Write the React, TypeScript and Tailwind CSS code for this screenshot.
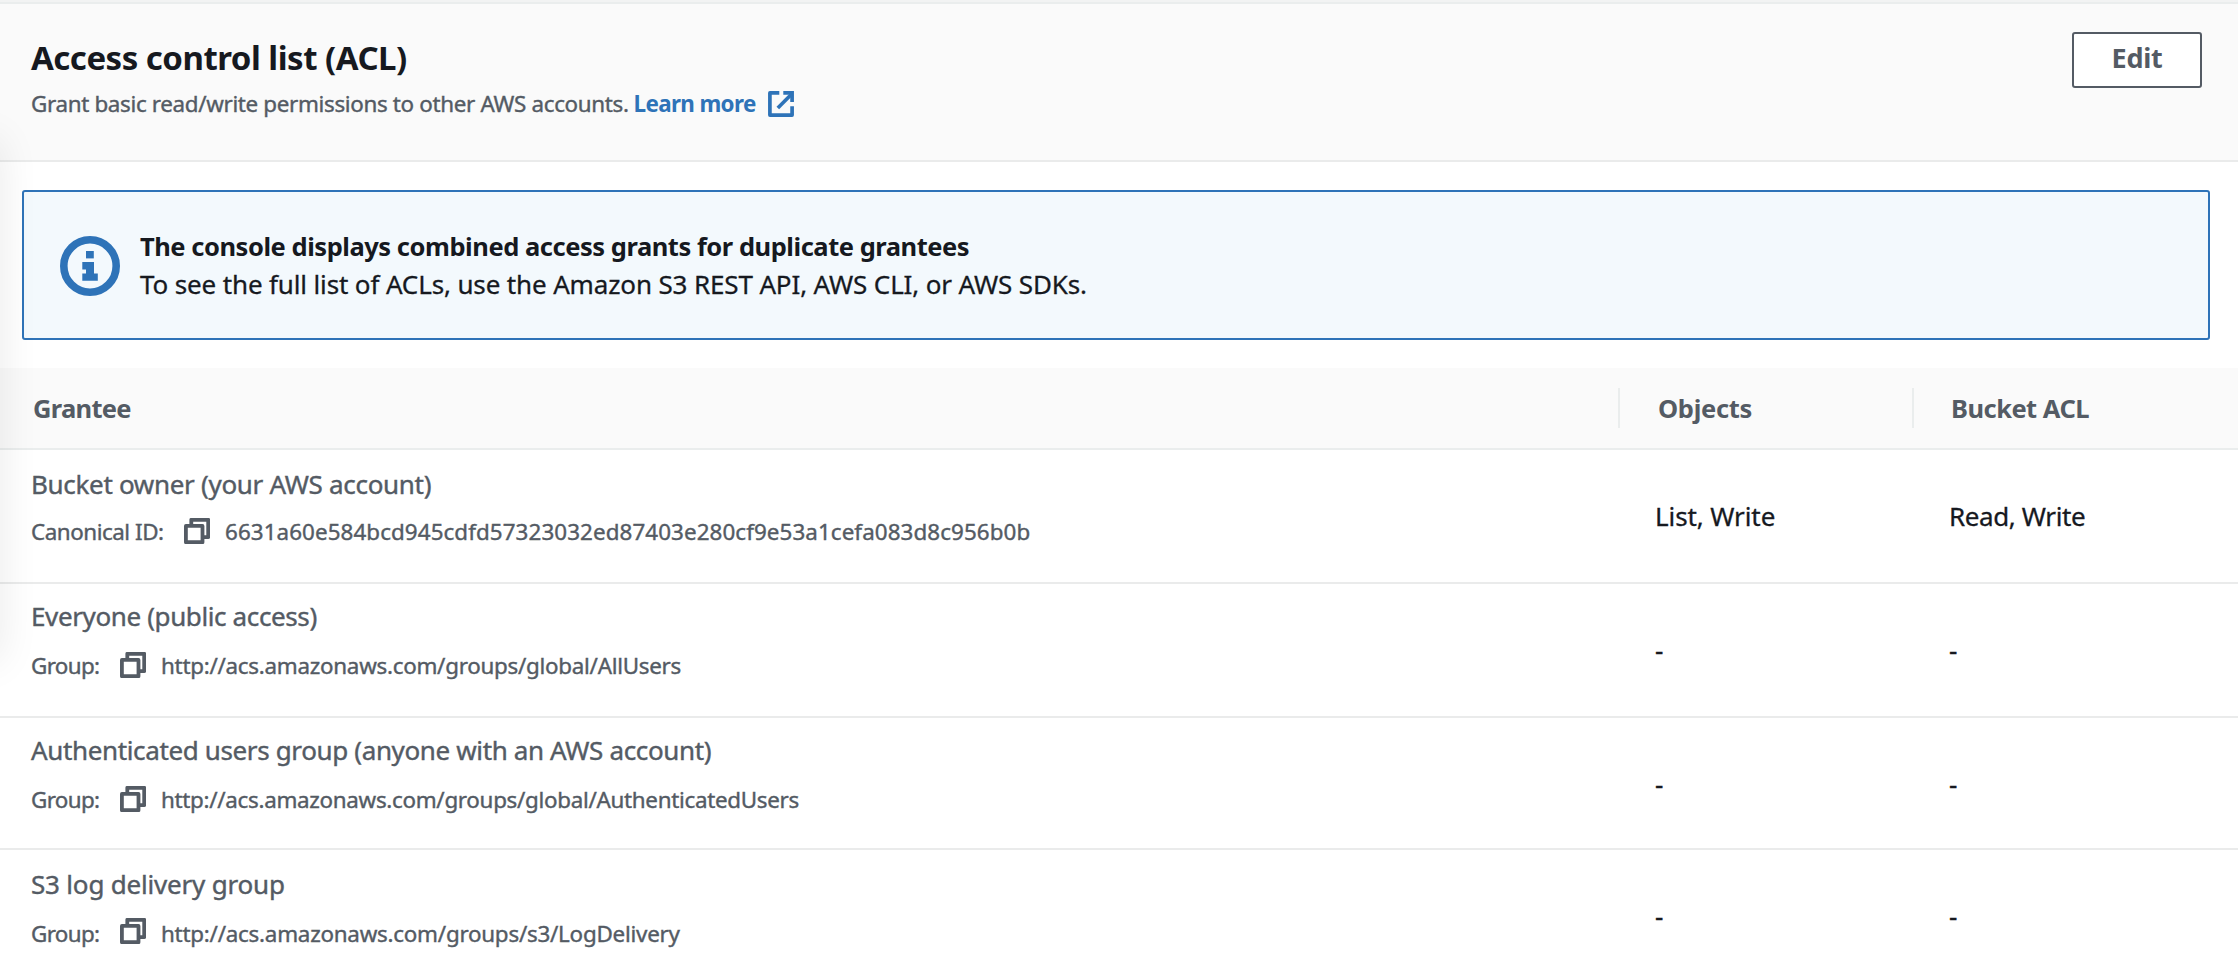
import React from 'react';

type Grant = {
  title: string;
  titleClass: string;
  label: string;
  labelClass: string;
  value: string;
  valueClass: string;
  objects: string;
  bucketAcl: string;
  rowClass: string;
};

const grants: Grant[] = [
  {
    title: 'Bucket owner (your AWS account)',
    titleClass: 'pt-[18px] h-[65px] tracking-[-0.31px]',
    label: 'Canonical ID:',
    labelClass: 'w-[153px] pt-[2px] tracking-[-0.46px]',
    value: '6631a60e584bcd945cdfd57323032ed87403e280cf9e53a1cefa083d8c956b0b',
    valueClass: 'pt-[2px] tracking-[0.08px]',
    objects: 'List, Write',
    bucketAcl: 'Read, Write',
    rowClass: 'h-[134px] border-b-2',
  },
  {
    title: 'Everyone (public access)',
    titleClass: 'pt-[16px] h-[65px] tracking-[-0.38px]',
    label: 'Group:',
    labelClass: 'w-[89px] pt-[2px] tracking-[-0.64px]',
    value: 'http://acs.amazonaws.com/groups/global/AllUsers',
    valueClass: 'pt-[2px] tracking-[-0.27px]',
    objects: '-',
    bucketAcl: '-',
    rowClass: 'h-[134px] border-b-2',
  },
  {
    title: 'Authenticated users group (anyone with an AWS account)',
    titleClass: 'pt-[16px] h-[65px] tracking-[-0.365px]',
    label: 'Group:',
    labelClass: 'w-[89px] pt-[2px] tracking-[-0.64px]',
    value: 'http://acs.amazonaws.com/groups/global/AuthenticatedUsers',
    valueClass: 'pt-[2px] tracking-[-0.3px]',
    objects: '-',
    bucketAcl: '-',
    rowClass: 'h-[132px] border-b-2',
  },
  {
    title: 'S3 log delivery group',
    titleClass: 'pt-[18px] h-[65px] tracking-[-0.19px]',
    label: 'Group:',
    labelClass: 'w-[89px] pt-[5px] tracking-[-0.64px]',
    value: 'http://acs.amazonaws.com/groups/s3/LogDelivery',
    valueClass: 'pt-[5px] tracking-[-0.24px]',
    objects: '-',
    bucketAcl: '-',
    rowClass: 'h-[124px]',
  },
];

function ExternalIcon() {
  return (
    <svg className="ml-[12px] mt-[4px] size-[26px] shrink-0" viewBox="0 0 26 26" fill="none" stroke="currentColor" strokeWidth="3.7">
      <path d="M11.3 1.9H1.9V24.1H24.1V15.3" strokeLinejoin="round" />
      <path d="M15.3 1.9H24.1V11" />
      <path d="M9.8 17 24 2.8" />
    </svg>
  );
}

function CopyIcon() {
  return (
    <svg className="size-[26px] shrink-0" viewBox="0 0 26 26" fill="none" stroke="currentColor" strokeWidth="3.8" strokeLinejoin="round">
      <path d="M7.3 6V1.8H24.2V19.2H20" />
      <path d="M1.9 7.9H18.5V24.2H1.9Z" />
    </svg>
  );
}

function InfoIcon() {
  return (
    <svg className="size-[60px] shrink-0 text-[#2e73b8] mt-[2px]" viewBox="0 0 60 60">
      <circle cx="30" cy="30" r="26.2" fill="none" stroke="currentColor" strokeWidth="7.6" />
      <path d="M26 15H33.8V22.4H26Z" fill="currentColor" />
      <path d="M22.3 26H34V37.5H37.8V44.8H22.3V37.5H26V33.6H22.3Z" fill="currentColor" />
    </svg>
  );
}

export default function App() {
  return (
    <div className="relative h-[974px] w-[2238px] overflow-hidden bg-white font-['Noto_Sans','Open_Sans',sans-serif] text-[26px] text-[#16191f] whitespace-nowrap">
      <div className="h-[4px] border-b-2 border-[#eaeded] bg-[#f2f3f3]" />

      <header className="flex h-[158px] items-start justify-between border-b-2 border-[#eaebeb] bg-[#fafafa] pl-[31px] pr-[36px]">
        <div className="pt-[34px]">
          <h2 className="text-[33px] font-bold leading-[40px] tracking-[-0.5px]">Access control list (ACL)</h2>
          <div className="mt-[9px] flex text-[22.4px] leading-[34px] text-[#545b64]">
            <p className="tracking-[-0.334px] [-webkit-text-stroke:0.4px]">Grant basic read/write permissions to other AWS accounts.</p>
            <a className="ml-[5px] flex font-bold tracking-[-0.64px] text-[#2e73b8]">
              Learn more
              <ExternalIcon />
            </a>
          </div>
        </div>
        <button className="mt-[28px] flex h-[56px] w-[130px] items-center justify-center rounded-[3px] border-2 border-[#545b64] bg-white pb-[3px] text-[27px] font-bold tracking-[-0.27px] text-[#545b64]">
          Edit
        </button>
      </header>

      <section className="ml-[22px] mr-[28px] mt-[28px] flex h-[150px] items-center gap-[20px] rounded-[3px] border-2 border-[#2e73b8] bg-[#f3f9fd] pl-[36px]">
        <InfoIcon />
        <div className="leading-[38px]">
          <p className="text-[25.5px] font-bold tracking-[-0.46px]">The console displays combined access grants for duplicate grantees</p>
          <p className="tracking-[-0.137px] [-webkit-text-stroke:0.3px]">To see the full list of ACLs, use the Amazon S3 REST API, AWS CLI, or AWS SDKs.</p>
        </div>
      </section>

      <div className="mt-[28px] grid h-[82px] grid-cols-[1618px_294px_1fr] items-center border-b-2 border-[#eaeded] bg-[#fafafa] text-[25.5px] font-bold leading-[40px] text-[#545b64]">
        <div className="pl-[33px] tracking-[-0.7px]">Grantee</div>
        <div className="border-l-2 border-[#eaeded] pl-[38px] tracking-[-0.3px]">Objects</div>
        <div className="border-l-2 border-[#eaeded] pl-[37px] tracking-[-0.52px]">Bucket ACL</div>
      </div>

      {grants.map((g) => (
        <div key={g.title} className={`grid grid-cols-[1618px_294px_1fr] border-[#eaebeb] leading-[32px] [-webkit-text-stroke:0.3px] ${g.rowClass}`}>
          <div className="pl-[31px] text-[#545b64] [-webkit-text-stroke:0.4px]">
            <div className={g.titleClass}>{g.title}</div>
            <div className="flex h-[32px] items-center text-[22.4px]">
              <span className={g.labelClass}>{g.label}</span>
              <CopyIcon />
              <span className={`ml-[15px] ${g.valueClass}`}>{g.value}</span>
            </div>
          </div>
          <div className="pl-[37px] pt-[50px] tracking-[-0.1px]">{g.objects}</div>
          <div className="pl-[37px] pt-[50px] tracking-[-0.39px]">{g.bucketAcl}</div>
        </div>
      ))}

      <div className="pointer-events-none absolute left-[-40px] top-[140px] h-[520px] w-[40px] shadow-[0_0_40px_rgba(0,0,0,0.09)]" />
    </div>
  );
}
